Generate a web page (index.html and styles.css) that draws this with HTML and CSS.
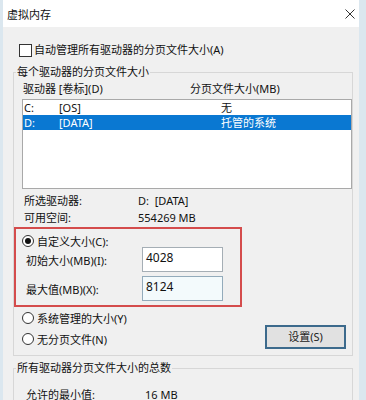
FILE: index.html
```html
<!DOCTYPE html>
<html lang="zh-CN">
<head>
<meta charset="utf-8">
<title>虚拟内存</title>
<link rel="stylesheet" href="styles.css">
</head>
<body>
<div class="window">
  <div class="titlebar">
    <span class="title">虚拟内存</span>
    <svg class="close" width="10" height="10" viewBox="0 0 10 10"><path d="M0.5 0.5 L9.5 9.5 M9.5 0.5 L0.5 9.5" stroke="#333" stroke-width="1" fill="none"/></svg>
  </div>
  <div class="content">
    <div class="check-row"><span class="checkbox"></span><span>自动管理所有驱动器的分页文件大小(A)</span></div>
    <fieldset class="group group-drives">
      <legend>每个驱动器的分页文件大小</legend>
      <div class="list-header"><span>驱动器 [卷标](D)</span><span>分页文件大小(MB)</span></div>
      <div class="listbox">
        <div class="list-row"><span>C:</span><span>[OS]</span><span>无</span></div>
        <div class="list-row selected"><span>D:</span><span>[DATA]</span><span>托管的系统</span></div>
      </div>
      <div class="info">
        <span>所选驱动器:</span><span>D:&nbsp; [DATA]</span>
        <span>可用空间:</span><span>554269 MB</span>
      </div>
      <div class="highlight">
        <div class="radio-row custom"><span class="radio checked"></span><span>自定义大小(C):</span></div>
        <div class="field-row"><span>初始大小(MB)(I):</span><div class="input">4028</div></div>
        <div class="field-row"><span>最大值(MB)(X):</span><div class="input focused">8124</div></div>
      </div>
      <div class="bottom-row">
        <div class="radios">
          <div class="radio-row"><span class="radio"></span><span>系统管理的大小(Y)</span></div>
          <div class="radio-row"><span class="radio"></span><span>无分页文件(N)</span></div>
        </div>
        <button class="btn">设置(S)</button>
      </div>
    </fieldset>
    <fieldset class="group group-total">
      <legend>所有驱动器分页文件大小的总数</legend>
      <div class="totals">
        <span>允许的最小值:</span><span>16 MB</span>
      </div>
    </fieldset>
  </div>
</div>
</body>
</html>
```

FILE: styles.css
```css
* { box-sizing: border-box; }
html, body {
  margin: 0;
  padding: 0;
}
body {
  background: #dbe7ef;
  font-family: "Noto Sans", "Noto Sans CJK SC", sans-serif;
  font-size: 11px;
  color: #111;
  width: 366px;
  height: 400px;
  overflow: hidden;
}
.window {
  margin-left: 3px;
  width: 356px;
  height: 400px;
  background: #f0f0f0;
  overflow: hidden;
}
.titlebar {
  height: 27px;
  background: #fff;
  display: flex;
  align-items: center;
  justify-content: space-between;
  padding: 2px 4px 0 4px;
}
.title {
  font-size: 11px;
  line-height: 14px;
}
.close {
  display: block;
  margin-top: -2px;
}
.content {
  padding: 0 6px 0 10px;
}
.check-row {
  margin-top: 15px;
  height: 16px;
  line-height: 16px;
  display: flex;
  align-items: center;
  padding-left: 6px;
}
.checkbox {
  width: 13px;
  height: 13px;
  border: 1px solid #333;
  background: #fff;
  margin-right: 2px;
  flex: none;
}
.group {
  margin: 0;
  padding: 0;
  border: 1px solid #d7d7d7;
  min-width: 0;
}
.group legend {
  padding: 0 1px;
  margin-left: 2px;
  line-height: 14px;
  font-size: 11px;
}
.group-drives {
  margin-top: 7px;
  padding-bottom: 6px;
}
.list-header {
  margin-top: 3px;
  line-height: 14px;
  padding-left: 9px;
  display: grid;
  grid-template-columns: 167px 1fr;
}
.listbox {
  margin: 3px 0 0 8px;
  height: 90px;
  border: 1px solid #a9a9a9;
  background: #fff;
}
.list-row {
  height: 15px;
  line-height: 15px;
  display: grid;
  grid-template-columns: 35px 162px 1fr;
  padding-left: 1px;
}
.list-row.selected {
  background: #0a78d2;
  color: #fff;
}
.info {
  margin-top: 3px;
  padding-left: 10px;
  display: grid;
  grid-template-columns: 114px 1fr;
  line-height: 17px;
}
.highlight {
  margin-top: 1px;
  width: 228px;
  height: 80px;
  border: 2px solid #d44c4c;
  padding-top: 6px;
}
.radio-row {
  display: flex;
  align-items: center;
  height: 21px;
  padding-left: 8px;
}
.radio-row.custom {
  height: 12px;
  padding-left: 6px;
}
.radio {
  width: 12px;
  height: 12px;
  border: 1px solid #333;
  border-radius: 50%;
  background: #fff;
  margin-right: 3px;
  flex: none;
  display: inline-flex;
  align-items: center;
  justify-content: center;
}
.radio.checked::after {
  content: "";
  width: 6px;
  height: 6px;
  border-radius: 50%;
  background: #111;
}
.field-row {
  display: grid;
  grid-template-columns: 116px 81px;
  align-items: center;
  padding-left: 10px;
  height: 25px;
}
.field-row + .field-row {
  margin-top: 4px;
}
.input {
  height: 25px;
  border: 1px solid #a5aeb5;
  background: #fff;
  padding: 2px 0 0 3px;
  line-height: 16px;
  font-size: 12px;
}
.input.focused {
  background: #f3fafc;
  border-color: #93abbb;
}
.bottom-row {
  display: flex;
  justify-content: space-between;
  align-items: flex-end;
}
.btn {
  width: 81px;
  height: 24px;
  margin: 0 6px 0 0;
  padding: 0;
  border: 2px solid #3c6a8c;
  background: #e1e1e1;
  font-family: inherit;
  font-size: 11px;
  color: #222;
  line-height: 18px;
}
.group-total {
  margin-top: 5px;
  height: 80px;
}
.totals {
  margin-top: 13px;
  padding-left: 12px;
  display: grid;
  grid-template-columns: 119px 1fr;
  line-height: 14px;
}
```
